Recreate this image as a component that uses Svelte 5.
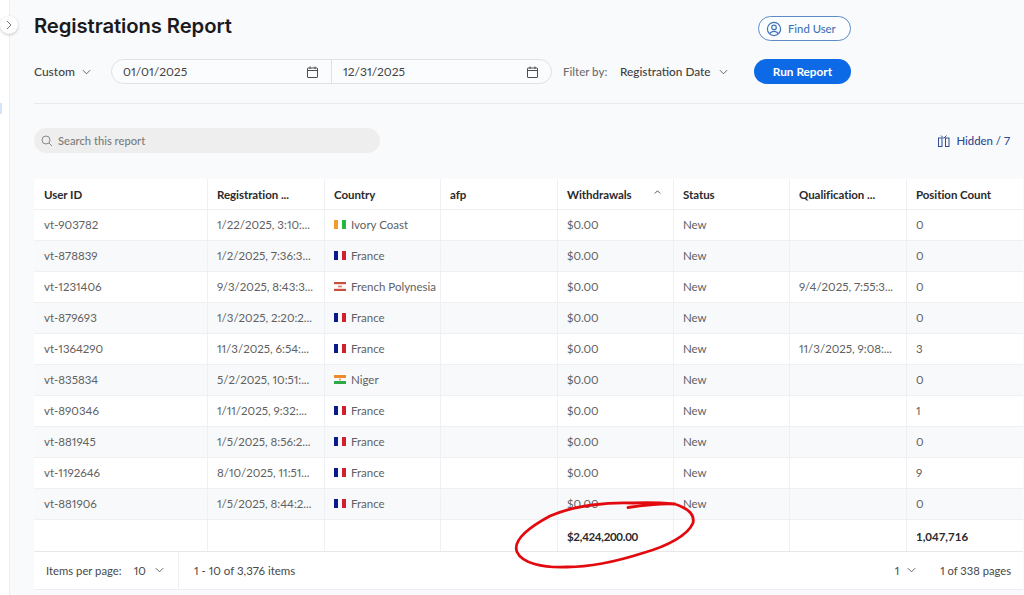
<script>
  const fr = { flag: 'fr', name: 'France' };
  const rows = [
    ['vt-903782', '1/22/2025, 3:10:...', { flag: 'ci', name: 'Ivory Coast' }, '', '0'],
    ['vt-878839', '1/2/2025, 7:36:3...', fr, '', '0'],
    ['vt-1231406', '9/3/2025, 8:43:3...', { flag: 'pf', name: 'French Polynesia' }, '9/4/2025, 7:55:3...', '0'],
    ['vt-879693', '1/3/2025, 2:20:2...', fr, '', '0'],
    ['vt-1364290', '11/3/2025, 6:54:...', fr, '11/3/2025, 9:08:...', '3'],
    ['vt-835834', '5/2/2025, 10:51:...', { flag: 'ne', name: 'Niger' }, '', '0'],
    ['vt-890346', '1/11/2025, 9:32:...', fr, '', '1'],
    ['vt-881945', '1/5/2025, 8:56:2...', fr, '', '0'],
    ['vt-1192646', '8/10/2025, 11:51...', fr, '', '9'],
    ['vt-881906', '1/5/2025, 8:44:2...', fr, '', '0']
  ];
</script>

<div class="page">
  <aside class="rail"><span class="mark"></span></aside>
  <button class="collapse" aria-label="Expand">
    <svg width="8" height="10" viewBox="0 0 8 10"><path d="M2 1l4 4-4 4" fill="none" stroke="#777" stroke-width="1"/></svg>
  </button>

  <main class="main">
    <div class="top">
      <h1>Registrations Report</h1>
      <button class="find">
        <svg width="16" height="16" viewBox="0 0 16 16" fill="none" stroke="#3f73b8" stroke-width="1.2"><circle cx="8" cy="8" r="6.6"/><circle cx="8" cy="6.4" r="2.3"/><path d="M3.8 12.8c.9-1.8 2.4-2.5 4.2-2.5s3.3.7 4.2 2.5"/></svg>
        Find User
      </button>
    </div>

    <div class="filters">
      <div class="custom">Custom <svg class="chev" width="9" height="6" viewBox="0 0 10 6"><path d="M1 1l4 4 4-4"/></svg></div>
      <div class="dates">
        <div class="date first">01/01/2025
          <svg class="cal" width="11" height="12" viewBox="0 0 11 12"><path d="M1 2h9a.5.5 0 0 1 .5.5v8.500a.5.5 0 0 1-.5.5H1a.5.5 0 0 1-.5-.5V2.500A.5.5 0 0 1 1 2zM.5 4.500h10M3 .5v2.500M8 .5v2.500"/></svg>
        </div>
        <div class="date second">12/31/2025
          <svg class="cal" width="11" height="12" viewBox="0 0 11 12"><path d="M1 2h9a.5.5 0 0 1 .5.5v8.500a.5.5 0 0 1-.5.5H1a.5.5 0 0 1-.5-.5V2.500A.5.5 0 0 1 1 2zM.5 4.500h10M3 .5v2.500M8 .5v2.500"/></svg>
        </div>
      </div>
      <span class="filter-label">Filter by:</span>
      <div class="filter-val">Registration Date <svg class="chev" width="9" height="6" viewBox="0 0 10 6"><path d="M1 1l4 4 4-4"/></svg></div>
      <button class="run">Run Report</button>
    </div>

    <div class="divider"></div>

    <div class="tools">
      <div class="search">
        <svg width="12" height="12" viewBox="0 0 12 12" fill="none" stroke="#8a8a8a" stroke-width="1"><circle cx="5" cy="5" r="4"/><path d="M8 8l3 3"/></svg>
        Search this report
      </div>
      <div class="hidden">
        <svg width="12" height="12" viewBox="0 0 12 12" fill="none" stroke="#2f4a94" stroke-width="1"><rect x=".5" y="3" width="3.500" height="8.500"/><rect x="7.500" y="3" width="3.500" height="8.500"/><path d="M3 .5l2.800 2.800L8.500.5"/></svg>
        Hidden / 7
      </div>
    </div>

    <div class="card">
      <table>
        <colgroup>
          <col class="w173" /><col class="w117" /><col class="w116" /><col class="w117" /><col class="w116" /><col class="w116" /><col class="w117" /><col />
        </colgroup>
        <thead>
          <tr>
            <th>User ID</th>
            <th>Registration ...</th>
            <th>Country</th>
            <th>afp</th>
            <th class="sort">Withdrawals
              <svg class="caret" width="7" height="4" viewBox="0 0 7 4"><path d="M.8 3.500l2.700-2.700 2.700 2.700"/></svg>
            </th>
            <th>Status</th>
            <th>Qualification ...</th>
            <th>Position Count</th>
          </tr>
        </thead>
        <tbody>
          {#each rows as r}
            <tr>
              <td>{r[0]}</td>
              <td>{r[1]}</td>
              <td class="country">
                <span class="cwrap">
                  <svg class="flag" width="12" height="9" viewBox="0 0 12 9">
                    {#if r[2].flag === 'fr'}
                      <rect x="0" width="4" height="9" fill="#0a1a8c"/><rect x="8" width="4" height="9" fill="#d3202f"/>
                    {:else if r[2].flag === 'ci'}
                      <rect x="0" width="4" height="9" fill="#f59a2c"/><rect x="8" width="4" height="9" fill="#25b83a"/>
                    {:else if r[2].flag === 'pf'}
                      <rect y="0" width="12" height="2.200" fill="#c9503f"/><rect y="6.800" width="12" height="2.200" fill="#c9503f"/><rect x="4" y="3.600" width="4" height="1.800" fill="#d88a70"/>
                    {:else}
                      <rect y="0" width="12" height="3" fill="#ee8a2c"/><rect y="6" width="12" height="3" fill="#2fa84a"/><circle cx="6" cy="4.500" r="1" fill="#ee8a2c"/>
                    {/if}
                  </svg>
                  {r[2].name}
                </span>
              </td>
              <td></td>
              <td>$0.00</td>
              <td>New</td>
              <td>{r[3]}</td>
              <td>{r[4]}</td>
            </tr>
          {/each}
          <tr class="total">
            <td></td><td></td><td></td><td></td>
            <td class="amount">$2,424,200.00</td>
            <td></td><td></td>
            <td>1,047,716</td>
          </tr>
        </tbody>
      </table>

      <div class="pager">
        <div class="per"><span class="nowrap">Items per page:</span><span class="num">10</span><svg class="chev" width="9" height="6" viewBox="0 0 10 6"><path d="M1 1l4 4 4-4"/></svg></div>
        <div class="count">1 - 10 of 3,376 items</div>
        <div class="pages"><span>1</span><svg class="chev" width="9" height="6" viewBox="0 0 10 6"><path d="M1 1l4 4 4-4"/></svg><span class="of">1 of 338 pages</span></div>
      </div>
    </div>
  </main>

  <svg class="scribble" width="1024" height="595" viewBox="0 0 1024 595" aria-hidden="true">
    <path d="M628 507.500C645 505 664 503.500 675 504C687 508 695 514 693 523C688 535 668 546 643 553C618 561 590 567 567 567C542 568 522 563 517 552C513 542 524 530 550 516C575 505 610 502 633 503C650 502 664 503 675 504" fill="none" stroke="#e20a0f" stroke-width="2.800" stroke-linecap="round"/>
  </svg>
</div>

<style>
  :global(body) { margin: 0; }
  .page {
    position: relative;
    width: 1024px;
    height: 595px;
    overflow: hidden;
    display: flex;
    background: #f9fafc;
    font-family: Lato, "Liberation Sans", sans-serif;
    font-variant-numeric: proportional-nums lining-nums;
    color: #4a4a4a;
  }
  .rail {
    position: relative;
    flex: 0 0 9px;
    background: #fff;
    border-right: 1px solid #eceef2;
  }
  .mark {
    position: absolute;
    left: 0;
    top: 103px;
    width: 2px;
    height: 11px;
    background: #d5e4f7;
  }
  .collapse {
    position: absolute;
    left: 0;
    top: 16px;
    width: 18px;
    height: 18px;
    padding: 0;
    border: 0;
    border-radius: 50%;
    background: #fff;
    box-shadow: 0 1px 3px rgba(0,0,0,.22);
    display: flex;
    align-items: center;
    justify-content: center;
  }
  .main {
    flex: 1;
    min-width: 0;
    padding-left: 24px;
    display: flex;
    flex-direction: column;
  }
  .top {
    height: 59px;
    flex: none;
    display: flex;
    align-items: flex-start;
    justify-content: space-between;
    padding-right: 173px;
  }
  h1 {
    margin: 14px 0 0;
    font: 600 20.300px/24px Inter, sans-serif;
    letter-spacing: -0.1px;
    color: #1b1b1d;
  }
  .find {
    margin-top: 16px;
    width: 93px;
    height: 25px;
    box-sizing: border-box;
    border: 1px solid #5b8cc8;
    border-radius: 13px;
    background: #fcfdfe;
    color: #3f73b8;
    font: 500 11.300px Lato, sans-serif;
    display: flex;
    align-items: center;
    gap: 6px;
    padding: 0 0 0 7px;
  }
  .filters {
    display: flex;
    align-items: center;
    height: 25px;
    flex: none;
    font-size: 12px;
  }
  .custom {
    width: 77px;
    font-weight: 500;
    display: flex;
    align-items: center;
    gap: 7px;
    color: #454545;
  }
  .chev { fill: none; stroke: #555; stroke-width: 1; }
  .dates {
    width: 441px;
    height: 25px;
    box-sizing: border-box;
    border: 1px solid #dfe1e5;
    border-radius: 13px;
    display: flex;
    background: #fbfcfd;
  }
  .date {
    flex: 1;
    display: flex;
    align-items: center;
    justify-content: space-between;
    padding: 0 13px 0 11px;
    color: #444;
  }
  .date.first { flex: 0 0 219px; box-sizing: border-box; padding-right: 13px; }
  .date.second {
    border-left: 1px solid #dfe1e5;
    padding-right: 13px;
  }
  .cal { fill: none; stroke: #4d4d4d; stroke-width: 1; }
  .filter-label {
    margin-left: 11px;
    width: 57px;
    font-size: 11.500px;
    color: #6e6e6e;
    font-weight: 500;
  }
  .filter-val {
    display: flex;
    align-items: center;
    gap: 8px;
    width: 134px;
    font-size: 11.800px;
    color: #404040;
    font-weight: 500;
  }
  .run {
    width: 97px;
    height: 25px;
    border: 0;
    border-radius: 13px;
    background: #0d6ae6;
    color: #fff;
    font: 700 11.800px Lato, sans-serif;
    padding: 0;
  }
  .divider {
    margin-top: 19px;
    height: 1px;
    flex: none;
    background: #e8eaed;
  }
  .tools {
    margin-top: 24px;
    height: 25px;
    flex: none;
    display: flex;
    align-items: center;
    justify-content: space-between;
    padding-right: 14px;
  }
  .search {
    width: 346px;
    height: 25px;
    border-radius: 13px;
    background: #eeeeee;
    display: flex;
    align-items: center;
    gap: 5px;
    padding-left: 7px;
    box-sizing: border-box;
    font-size: 11.200px;
    font-weight: 500;
    color: #7c7c7c;
  }
  .hidden {
    display: flex;
    align-items: center;
    gap: 6px;
    font-size: 11.400px;
    font-weight: 500;
    color: #2f4a94;
  }
  .card {
    margin-top: 26px;
    width: 989px;
    background: #fff;
  }
  table {
    width: 989px;
    table-layout: fixed;
    border-collapse: collapse;
    font-size: 11.500px;
  }
  .w173 { width: 173px; }
  .w117 { width: 117px; }
  .w116 { width: 116px; }
  th {
    height: 30px;
    padding: 1px 0 0 10px;
    text-align: left;
    font-weight: 700;
    color: #2a2a2c;
    border-right: 1px solid #eef0f3;
    border-bottom: 1px solid #eef0f3;
    box-sizing: border-box;
    white-space: nowrap;
    letter-spacing: -0.05px;
  }
  th + th { padding-left: 9.500px; }
  th:last-child { border-right: 0; }
  .sort { position: relative; }
  .caret {
    position: absolute;
    right: 12px;
    top: 11px;
    fill: none;
    stroke: #555;
    stroke-width: 1;
  }
  td {
    height: 31px;
    padding: 0 0 0 10px;
    box-sizing: border-box;
    color: #616161;
    border-right: 1px solid #eef0f3;
    border-bottom: 1px solid #eef0f3;
    white-space: nowrap;
    overflow: hidden;
  }
  td + td { padding-left: 9.500px; }
  td:last-child { border-right: 0; }
  tbody tr:nth-child(even) td { background: #f8f9fb; }
  .country .cwrap {
    display: flex;
    align-items: center;
    gap: 5px;
  }
  .flag { flex: none; }
  .total td {
    height: 32px;
    padding-top: 2px;
    font-weight: 700;
    font-variant-numeric: tabular-nums lining-nums;
    color: #2a2a2c;
    border-bottom: 1px solid #e6e8eb;
  }
  .total .amount { letter-spacing: -0.3px; }
  .pager {
    height: 38px;
    display: flex;
    align-items: center;
    font-size: 11.500px;
    color: #484848;
    border-bottom: 1px solid #eceef1;
    box-sizing: border-box;
  }
  .nowrap { white-space: nowrap; font-size: 11.300px; }
  .per {
    width: 145px;
    flex: none;
    height: 100%;
    box-sizing: border-box;
    padding-left: 12px;
    display: flex;
    align-items: center;
    border-right: 1px solid #eef0f3;
  }
  .num { margin: 0 9px 0 12px; }
  .count { margin-left: 15px; }
  .pages {
    margin-left: auto;
    padding-right: 12px;
    display: flex;
    align-items: center;
    gap: 8px;
  }
  .of { margin-left: 16px; font-size: 11.200px; }
  .scribble {
    position: absolute;
    left: 0;
    top: 0;
    pointer-events: none;
  }
</style>
